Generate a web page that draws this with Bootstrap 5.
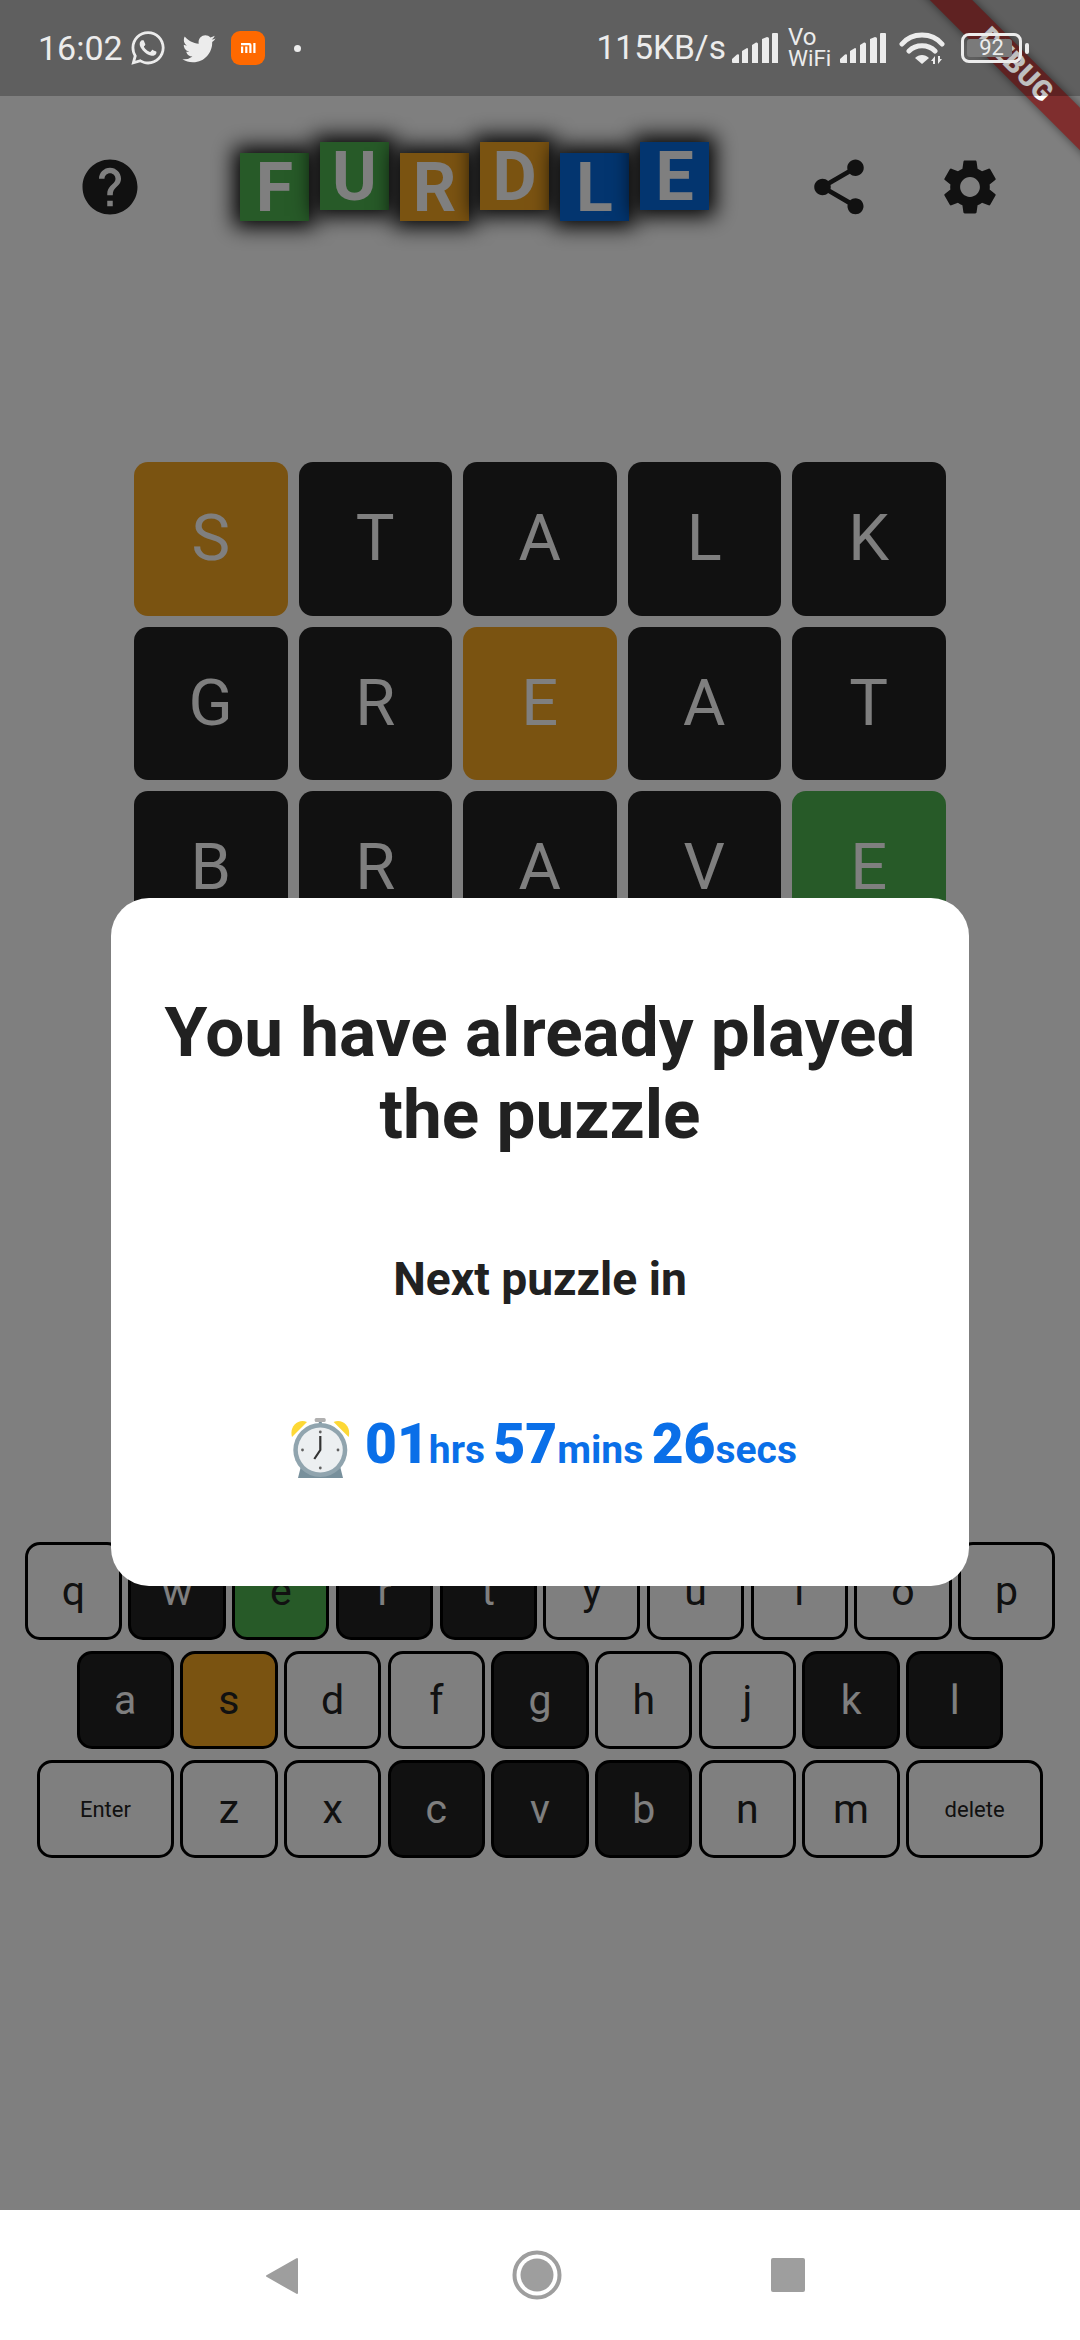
<!DOCTYPE html>
<html lang="en">
<head>
  <meta charset="UTF-8" />
  <title>Furdle</title>
  <link href="https://cdn.jsdelivr.net/npm/bootstrap@5.3.0/dist/css/bootstrap.min.css" rel="stylesheet" />
  <style>
    html, body { margin: 0; height: 2340px; overflow: hidden; background: #fff; }
    body { font-family: Roboto, "Liberation Sans", sans-serif; color: #222; }

    /* app sits under the scrim, status bar and dialog sit on top */
    .app-area { height: 2210px; overflow: hidden; position: relative; background: #fff; }
    .app-scrim { position: absolute; inset: 0; background: rgba(0,0,0,.5); z-index: 5; }

    .status-tint { position: absolute; top: 0; left: 0; right: 0; height: 96px; background: rgba(0,0,0,.25); z-index: 7; padding: 0 51px 0 38px; color: #ececec; }
    .status-time { font-size: 34px; line-height: 1; margin-right: 5px; }
    .status-tw { margin-left: 12px; }
    .status-speed { font-size: 33.500px; line-height: 1; margin-right: 6px; }
    .status-mi { width: 34px; height: 34px; margin-left: 13px; }
    .status-dot { width: 7px; height: 7px; border-radius: 50%; background: #ececec; margin-left: 29px; }
    .status-vowifi { width: 42px; margin: 0 10px; line-height: 21px; }
    .vo-line { font-size: 24px; }
    .wifi-line { font-size: 22.500px; }
    .status-wifi { margin-left: 13px; }
    .status-batt { position: relative; width: 61px; height: 30px; border: 3.5px solid #ececec; border-radius: 8px; margin-left: 16px; font-size: 22px; line-height: 23px; text-align: center; }
    .status-batt::before { content: ""; position: absolute; left: 3px; top: 3px; bottom: 3px; width: 45px; background: #7a7a7a; border-radius: 3px; z-index: -1; }
    .status-nub { width: 4px; height: 11px; background: #ececec; border-radius: 2px; margin-left: 3px; }

    .debug-flag, .debug-word { position: absolute; left: 862px; top: 46px; width: 300px; height: 30px; transform: rotate(45deg); }
    .debug-flag { background: #ff5c5c; box-shadow: 0 0 10px rgba(0,0,0,.5); z-index: 4; }
    .debug-word { color: #fff; font-weight: 900; font-size: 28px; line-height: 30px; text-align: center; z-index: 6; letter-spacing: .5px; padding-left: 11px; }

    .top-bar { padding: 154px 77px 0 77px; height: 279px; }
    .top-icon { width: 66px; height: 66px; fill: #222; }
    .top-gear { margin-left: 65px; }
    .brand-row { gap: 11px; margin-left: 97px; margin-top: -1px; }
    .brand-tile { width: 69px; height: 68px; color: #fff; font-weight: 700; font-size: 68px; line-height: 70px; text-align: center; box-shadow: 0 0 20px 6px #000; }
    .brand-tile.is-up { margin-top: -11px; margin-bottom: 11px; }
    .brand-blue { background: #066ade; }

    .board { padding: 0 0 0 134px; gap: 11px; margin-top: 183px; height: 1080px; }
    .board-row { gap: 11px; }
    .tile { width: 153.5px; height: 153.5px; border-radius: 14px; background: #222; color: #fff; font-size: 65px; display: flex; align-items: center; justify-content: center; line-height: 1; }
    .tile-hit { background: #4eb450; }
    .tile-near { background: #f5a623; }

    .keyboard { gap: 11.5px; }
    .key-row { gap: 6.4px; }
    .kbd-key { width: 97.3px; height: 97.5px; border: 3px solid #000; border-radius: 15px; background: #fff; color: #222; font-size: 41px; display: flex; align-items: center; justify-content: center; line-height: 1; padding-top: 2px; }
    .kbd-wide { width: 137px; font-size: 22px; }
    .kbd-dark { background: #222; color: #fff; }
    .kbd-hit { background: #4eb450; }
    .kbd-near { background: #f5a623; }

    .nav-strip { height: 130px; background: #fff; }
    .nav-strip svg { position: absolute; }
    .nav-back { left: 265px; top: 47px; }
    .nav-home { left: 512px; top: 40px; }
    .nav-recent { left: 771px; top: 48px; }

    .dialog-box { position: absolute; left: 111px; top: 898px; width: 858px; height: 688px; background: #fff; border-radius: 38px; z-index: 8; }
    .dialog-title { font-size: 69.3px; font-weight: 700; line-height: 82px; color: #212121; margin: 0; padding-top: 94px; text-align: center; }
    .dialog-sub { font-size: 46.2px; font-weight: 700; line-height: 1; color: #212121; margin-top: 100px; text-align: center; }
    .dialog-timer { margin-top: 115px; padding-left: 8px; color: #0a6fe8; font-weight: 700; gap: 8.5px; line-height: 1; }
    .dialog-timer b { font-size: 55px; }
    .dialog-timer span { font-size: 39px; }
    .timer-clock { margin-right: 5.5px; }
  </style>
</head>
<body>

<div class="app-area">
  <div class="top-bar d-flex align-items-start">
    <svg class="top-icon flex-shrink-0" viewBox="0 0 24 24"><path d="M12 2C6.48 2 2 6.48 2 12s4.48 10 10 10 10-4.48 10-10S17.52 2 12 2zm1 17h-2v-2h2v2zm2.07-7.75l-.9.92C13.45 12.9 13 13.5 13 15h-2v-.5c0-1.1.45-2.1 1.17-2.83l1.24-1.26c.37-.36.59-.86.59-1.41 0-1.1-.9-2-2-2s-2 .9-2 2H8c0-2.21 1.79-4 4-4s4 1.79 4 4c0 .88-.36 1.68-.93 2.25z"/></svg>
    <div class="brand-row d-flex">
      <div class="brand-tile tile-hit">F</div>
      <div class="brand-tile tile-hit is-up">U</div>
      <div class="brand-tile tile-near">R</div>
      <div class="brand-tile tile-near is-up">D</div>
      <div class="brand-tile brand-blue">L</div>
      <div class="brand-tile brand-blue is-up">E</div>
    </div>
    <svg class="top-icon flex-shrink-0 ms-auto" viewBox="0 0 24 24"><path d="M18 16.08c-.76 0-1.44.3-1.96.77L8.91 12.7c.05-.23.09-.46.09-.7s-.04-.47-.09-.7l7.05-4.11c.54.5 1.25.81 2.04.81 1.66 0 3-1.34 3-3s-1.34-3-3-3-3 1.34-3 3c0 .24.04.47.09.7L8.04 9.81C7.5 9.31 6.79 9 6 9c-1.66 0-3 1.34-3 3s1.34 3 3 3c.79 0 1.5-.31 2.04-.81l7.12 4.16c-.05.21-.08.43-.08.65 0 1.61 1.31 2.92 2.92 2.92 1.61 0 2.92-1.31 2.92-2.92s-1.31-2.92-2.92-2.92z"/></svg>
    <svg class="top-icon top-gear flex-shrink-0" viewBox="0 0 24 24"><path d="M19.14 12.94c.04-.3.06-.61.06-.94 0-.32-.02-.64-.07-.94l2.03-1.58c.18-.14.23-.41.12-.61l-1.92-3.32c-.12-.22-.37-.29-.59-.22l-2.39.96c-.5-.38-1.03-.7-1.62-.94l-.36-2.54c-.04-.24-.24-.41-.48-.41h-3.84c-.24 0-.43.17-.47.41l-.36 2.54c-.59.24-1.13.57-1.62.94l-2.39-.96c-.22-.08-.47 0-.59.22L2.74 8.87c-.12.21-.08.47.12.61l2.03 1.58c-.05.3-.09.63-.09.94s.02.64.07.94l-2.03 1.58c-.18.14-.23.41-.12.61l1.92 3.32c.12.22.37.29.59.22l2.39-.96c.5.38 1.03.7 1.62.94l.36 2.54c.05.24.24.41.48.41h3.84c.24 0 .44-.17.47-.41l.36-2.54c.59-.24 1.13-.56 1.62-.94l2.39.96c.22.08.47 0 .59-.22l1.92-3.32c.12-.22.07-.47-.12-.61l-2.01-1.58zM12 15.6c-1.98 0-3.6-1.62-3.6-3.6s1.62-3.6 3.6-3.6 3.6 1.62 3.6 3.6-1.62 3.6-3.6 3.6z"/></svg>
  </div>

  <div class="board d-flex flex-column">
    <div class="board-row d-flex"><div class="tile tile-near">S</div><div class="tile">T</div><div class="tile">A</div><div class="tile">L</div><div class="tile">K</div></div>
    <div class="board-row d-flex"><div class="tile">G</div><div class="tile">R</div><div class="tile tile-near">E</div><div class="tile">A</div><div class="tile">T</div></div>
    <div class="board-row d-flex"><div class="tile">B</div><div class="tile">R</div><div class="tile">A</div><div class="tile">V</div><div class="tile tile-hit">E</div></div>
  </div>

  <div class="keyboard d-flex flex-column align-items-center">
    <div class="key-row d-flex"><div class="kbd-key">q</div><div class="kbd-key kbd-dark">w</div><div class="kbd-key kbd-hit">e</div><div class="kbd-key kbd-dark">r</div><div class="kbd-key kbd-dark">t</div><div class="kbd-key">y</div><div class="kbd-key">u</div><div class="kbd-key">i</div><div class="kbd-key">o</div><div class="kbd-key">p</div></div>
    <div class="key-row d-flex"><div class="kbd-key kbd-dark">a</div><div class="kbd-key kbd-near">s</div><div class="kbd-key">d</div><div class="kbd-key">f</div><div class="kbd-key kbd-dark">g</div><div class="kbd-key">h</div><div class="kbd-key">j</div><div class="kbd-key kbd-dark">k</div><div class="kbd-key kbd-dark">l</div></div>
    <div class="key-row d-flex"><div class="kbd-key kbd-wide">Enter</div><div class="kbd-key">z</div><div class="kbd-key">x</div><div class="kbd-key kbd-dark">c</div><div class="kbd-key kbd-dark">v</div><div class="kbd-key kbd-dark">b</div><div class="kbd-key">n</div><div class="kbd-key">m</div><div class="kbd-key kbd-wide">delete</div></div>
  </div>

  <div class="debug-flag"></div>
  <div class="app-scrim"></div>
  <div class="debug-word">DEBUG</div>
</div>

<div class="status-tint d-flex align-items-center">
  <span class="status-time">16:02</span>
  <svg width="40" height="40" viewBox="0 0 24 24" fill="#ececec"><path d="M12.04 2C6.58 2 2.13 6.45 2.13 11.91c0 1.75.46 3.45 1.32 4.95L2.05 22l5.25-1.38c1.45.79 3.08 1.21 4.74 1.21 5.46 0 9.91-4.45 9.91-9.91S17.5 2 12.04 2zm0 18.15c-1.48 0-2.93-.4-4.2-1.15l-.3-.18-3.12.82.83-3.04-.2-.31a8.2 8.2 0 0 1-1.26-4.38c0-4.54 3.7-8.24 8.24-8.24s8.24 3.7 8.24 8.24-3.69 8.24-8.23 8.24zm4.52-6.16c-.25-.12-1.47-.72-1.69-.81-.23-.08-.39-.12-.56.12-.17.25-.64.81-.78.97-.14.17-.29.19-.54.06-.25-.12-1.05-.39-1.99-1.23-.74-.66-1.23-1.47-1.38-1.72-.14-.25-.02-.38.11-.51.11-.11.25-.29.37-.43s.17-.25.25-.41c.08-.17.04-.31-.02-.43s-.56-1.34-.76-1.84c-.2-.48-.41-.42-.56-.43h-.48c-.17 0-.43.06-.66.31-.22.25-.86.85-.86 2.07s.89 2.4 1.01 2.56c.12.17 1.75 2.67 4.23 3.74.59.26 1.05.41 1.41.52.59.19 1.13.16 1.56.1.48-.07 1.47-.6 1.67-1.18.21-.58.21-1.07.14-1.18-.06-.1-.22-.16-.47-.28z"/></svg>
  <svg class="status-tw" width="38" height="38" viewBox="0 0 24 24" fill="#ececec"><path d="M22.46 6c-.77.35-1.6.58-2.46.69.88-.53 1.56-1.37 1.88-2.38-.83.5-1.75.85-2.72 1.05C18.37 4.5 17.26 4 16 4c-2.35 0-4.27 1.92-4.27 4.29 0 .34.04.67.11.98C8.28 9.09 5.11 7.38 3 4.79c-.37.63-.58 1.37-.58 2.15 0 1.49.75 2.81 1.91 3.56-.71 0-1.37-.2-1.95-.5v.03c0 2.08 1.48 3.82 3.44 4.21a4.22 4.22 0 0 1-1.93.07 4.28 4.28 0 0 0 4 2.98 8.52 8.52 0 0 1-5.33 1.84c-.34 0-.68-.02-1.02-.06C3.44 20.29 5.7 21 8.12 21 16 21 20.33 14.46 20.33 8.79c0-.19 0-.37-.01-.56.84-.6 1.56-1.36 2.14-2.23z"/></svg>
  <svg class="status-mi" viewBox="0 0 34 34"><rect width="34" height="34" rx="9" fill="#ff6900"/><path d="M10 12h8.5a2 2 0 0 1 2 2v8h-2.2v-7.8H10zM10 15.5h2.2V22H10zM14.2 15.5h2.2V22h-2.2zM22.3 12h2.2v10h-2.2z" fill="#fff"/></svg>
  <div class="status-dot"></div>
  <span class="status-speed ms-auto">115KB/s</span>
  <svg width="46" height="32" viewBox="0 0 46 32" fill="#ececec"><path d="M0 30v-3l5-4.500q2-1 2 1V31H1q-1 0-1-1zM10 31V19l5-3q1 0 1 1v14zM20 31V13l4-2.500q2-.5 2 1.500V31zM30 31V7l5-2q2 0 2 1.500V31zM40 31V2q0-1 1-1h4q1 0 1 1v29z"/></svg>
  <div class="status-vowifi"><div class="vo-line">Vo</div><div class="wifi-line">WiFi</div></div>
  <svg width="46" height="32" viewBox="0 0 46 32" fill="#ececec"><path d="M0 30v-3l5-4.500q2-1 2 1V31H1q-1 0-1-1zM10 31V19l5-3q1 0 1 1v14zM20 31V13l4-2.500q2-.5 2 1.500V31zM30 31V7l5-2q2 0 2 1.500V31zM40 31V2q0-1 1-1h4q1 0 1 1v29z"/></svg>
  <svg class="status-wifi" width="46" height="34" viewBox="0 0 46 34" fill="#ececec"><path d="M3 13C13 1 33 1 43 13M10 20c7-7 19-7 26 0" fill="none" stroke="#ececec" stroke-width="5" stroke-linecap="round"/><path d="M16 27c4-4 10-4 14 0l-7 6z"/><path d="M36 25l-4 5h4zM36 33v-3h-2v3zM39 33l4-5h-4zM39 25v3h2v-3z"/></svg>
  <div class="status-batt">92</div>
  <div class="status-nub"></div>
</div>

<div class="dialog-box d-flex flex-column">
  <h1 class="dialog-title">You have already played<br>the puzzle</h1>
  <div class="dialog-sub">Next puzzle in</div>
  <div class="dialog-timer d-flex justify-content-center align-items-baseline">
    <svg class="timer-clock align-self-center" width="60" height="62" viewBox="13 10 60 62">
      <path d="M29 15C20 11 11 20 14 30z" fill="#fdd835"/><path d="M55.600 15C64.600 11 73.600 20 70.600 30z" fill="#fdd835"/>
      <rect x="36.700" y="11" width="11" height="4" rx="1.500" fill="#b0b0b0"/><rect x="40.800" y="15" width="3" height="3" fill="#78909c"/>
      <path d="M24 55h37l4 16H20z" fill="#78909c"/>
      <circle cx="42.300" cy="43" r="27" fill="#90a4ae"/><circle cx="42.300" cy="43" r="22.500" fill="#eceff1"/>
      <g fill="#616161"><circle cx="42.300" cy="25" r="1.400"/><circle cx="42.300" cy="61" r="1.400"/><circle cx="24.500" cy="43" r="1.400"/><circle cx="60" cy="43" r="1.400"/></g>
      <path d="M42.300 29v14l-6 9" fill="none" stroke="#333" stroke-width="2.200"/>
    </svg>
    <div><b>01</b><span>hrs</span></div>
    <div><b>57</b><span>mins</span></div>
    <div><b>26</b><span>secs</span></div>
  </div>
</div>

<div class="nav-strip position-relative">
  <svg class="nav-back" width="34" height="38" viewBox="0 0 34 38"><path d="M32 2v34L2 19z" fill="#9e9e9e" stroke="#9e9e9e" stroke-width="2" stroke-linejoin="round"/></svg>
  <svg class="nav-home" width="50" height="50" viewBox="0 0 50 50"><circle cx="25" cy="25" r="22.500" fill="none" stroke="#9e9e9e" stroke-width="4"/><circle cx="25" cy="25" r="16.500" fill="#9e9e9e"/></svg>
  <svg class="nav-recent" width="34" height="34" viewBox="0 0 34 34"><rect width="34" height="34" rx="2" fill="#9e9e9e"/></svg>
</div>

<script src="https://cdn.jsdelivr.net/npm/bootstrap@5.3.0/dist/js/bootstrap.bundle.min.js"></script>
</body>
</html>
